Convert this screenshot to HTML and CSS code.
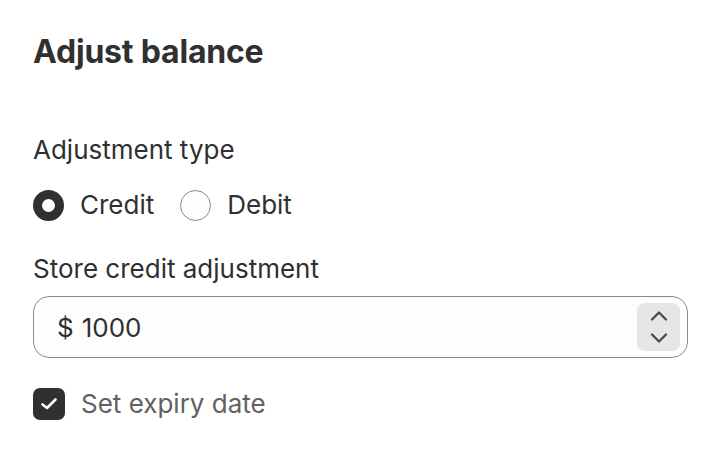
FILE: index.html
```html
<!DOCTYPE html>
<html lang="en">
<head>
    <meta charset="UTF-8" />
    <title>Adjust balance</title>
    <link rel="stylesheet" href="styles.css">
</head>
<body>
    <div class="painel">
        <h1>Adjust balance</h1>

        <div class="campo">
            <div class="rotulo">Adjustment type</div>
            <div class="radios">
                <label class="opcao">
                    <span class="radio marcado"></span>
                    <span>Credit</span>
                </label>
                <label class="opcao">
                    <span class="radio"></span>
                    <span>Debit</span>
                </label>
            </div>
        </div>

        <div class="campo-valor">
            <div class="rotulo">Store credit adjustment</div>
            <div class="entrada">
                <span class="prefixo">$</span>
                <span class="valor">1000</span>
                <div class="setas">
                    <svg width="20" height="12" viewBox="0 0 20 12"><path d="M3 9.5 L10 2.5 L17 9.5" fill="none" stroke="#4a4a4a" stroke-width="2.3" stroke-linecap="round" stroke-linejoin="round"/></svg>
                    <svg width="20" height="12" viewBox="0 0 20 12"><path d="M3 2.5 L10 9.5 L17 2.5" fill="none" stroke="#4a4a4a" stroke-width="2.3" stroke-linecap="round" stroke-linejoin="round"/></svg>
                </div>
            </div>
        </div>

        <label class="opcao check">
            <span class="caixa">
                <svg width="20" height="16" viewBox="0 0 20 16"><path d="M3.5 8.5 L8 12 L16.5 3.5" fill="none" stroke="#fff" stroke-width="2.6" stroke-linecap="round" stroke-linejoin="round"/></svg>
            </span>
            <span class="texto-check">Set expiry date</span>
        </label>
    </div>
</body>
</html>
```

FILE: styles.css
```css
body {
    margin: 0;
    background: #ffffff;
    font-family: Inter, "Noto Sans", sans-serif;
    color: #303030;
}
.painel {
    padding: 28px 32px 0 33px;
}
h1 {
    margin: 0;
    font-size: 32px;
    font-weight: 700;
    line-height: 48px;
    letter-spacing: -0.2px;
}
.rotulo {
    font-size: 26px;
    line-height: 40px;
}
.campo {
    margin-top: 54px;
}
.radios {
    display: flex;
    gap: 26px;
    margin-top: 15px;
}
.opcao {
    display: flex;
    align-items: center;
    gap: 16px;
    font-size: 26px;
    line-height: 40px;
}
.radio {
    width: 31px;
    height: 31px;
    box-sizing: border-box;
    border-radius: 50%;
    border: 1.5px solid #8a8a8a;
    background: #fdfdfd;
}
.radio.marcado {
    border: 9.5px solid #303030;
    background: #ffffff;
}
.campo-valor {
    margin-top: 24px;
}
.entrada {
    margin-top: 7px;
    height: 62px;
    box-sizing: border-box;
    border: 1.5px solid #8a8a8a;
    border-radius: 16px;
    background: #fdfdfd;
    display: flex;
    align-items: center;
    padding: 0 7px 0 23px;
    font-size: 26px;
}
.prefixo {
    margin-right: 8px;
}
.valor {
    flex: 1;
}
.setas {
    width: 43px;
    height: 48px;
    border-radius: 8px;
    background: #e6e6e6;
    display: flex;
    flex-direction: column;
    align-items: center;
    justify-content: center;
    gap: 10px;
}
.setas svg {
    display: block;
}
.check {
    margin-top: 26px;
}
.caixa {
    width: 32px;
    height: 32px;
    border-radius: 7px;
    background: #303030;
    display: flex;
    align-items: center;
    justify-content: center;
}
.texto-check {
    color: #616161;
}
```
